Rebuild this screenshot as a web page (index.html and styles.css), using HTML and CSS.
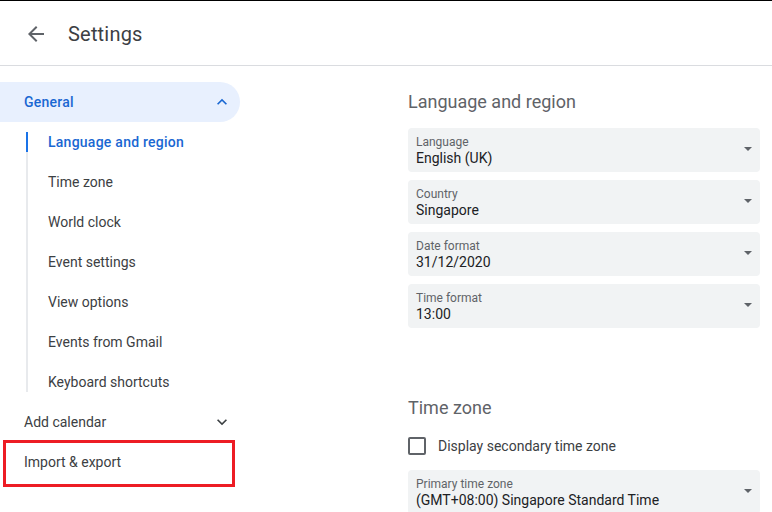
FILE: index.html
```html
<!DOCTYPE html>
<html lang="en">
<head>
<meta charset="utf-8">
<title>Settings</title>
<link rel="stylesheet" href="styles.css">
</head>
<body>
<header class="header">
  <button class="back" aria-label="Back">
    <svg width="24" height="24" viewBox="0 0 24 24"><path d="M20 11H7.83l5.59-5.59L12 4l-8 8 8 8 1.41-1.41L7.83 13H20v-2z" fill="#5f6368"/></svg>
  </button>
  <h1 class="title">Settings</h1>
</header>
<main class="main">
  <nav class="sidebar">
    <div class="nav-row nav-open">
      <span>General</span>
      <svg class="chev" width="20" height="20" viewBox="0 0 24 24"><path d="M7.41 15.41L12 10.83l4.59 4.58L18 14l-6-6-6 6z" fill="#1967d2"/></svg>
    </div>
    <ul class="sublist">
      <li class="sub active">Language and region</li>
      <li class="sub">Time zone</li>
      <li class="sub">World clock</li>
      <li class="sub">Event settings</li>
      <li class="sub">View options</li>
      <li class="sub">Events from Gmail</li>
      <li class="sub">Keyboard shortcuts</li>
    </ul>
    <div class="nav-row">
      <span>Add calendar</span>
      <svg class="chev" width="20" height="20" viewBox="0 0 24 24"><path d="M7.41 8.59L12 13.17l4.59-4.58L18 10l-6 6-6-6z" fill="#3c4043"/></svg>
    </div>
    <div class="nav-row highlight">
      <span>Import &amp; export</span>
      <span class="redbox"></span>
    </div>
  </nav>
  <section class="content">
    <h2 class="section-title">Language and region</h2>
    <div class="fields">
      <div class="field"><div class="field-text"><div class="label">Language</div><div class="value">English (UK)</div></div><span class="caret"></span></div>
      <div class="field"><div class="field-text"><div class="label">Country</div><div class="value">Singapore</div></div><span class="caret"></span></div>
      <div class="field"><div class="field-text"><div class="label">Date format</div><div class="value">31/12/2020</div></div><span class="caret"></span></div>
      <div class="field"><div class="field-text"><div class="label">Time format</div><div class="value">13:00</div></div><span class="caret"></span></div>
    </div>
    <h2 class="section-title second">Time zone</h2>
    <label class="check-row"><span class="checkbox"></span><span>Display secondary time zone</span></label>
    <div class="field tz"><div class="field-text"><div class="label">Primary time zone</div><div class="value">(GMT+08:00) Singapore Standard Time</div></div><span class="caret"></span></div>
  </section>
</main>
</body>
</html>
```
FILE: styles.css
```css
* { box-sizing: border-box; }
html, body { margin: 0; padding: 0; }
body {
  font-family: Roboto, "Liberation Sans", Arial, sans-serif;
  color: #3c4043;
  background: #fff;
  width: 772px;
  height: 512px;
  overflow: hidden;
}
.header {
  height: 66px;
  border-top: 1px solid #000;
  border-bottom: 1px solid #dadce0;
  display: flex;
  align-items: center;
  padding-left: 24px;
  padding-top: 2px;
}
.back {
  width: 24px;
  height: 24px;
  padding: 0;
  border: 0;
  background: none;
  display: flex;
}
.title {
  margin: 0 0 0 20px;
  font-size: 20px;
  font-weight: 400;
  color: #3c4043;
  letter-spacing: 0.2px;
}
.main {
  display: flex;
}
.sidebar {
  width: 256px;
  flex: none;
  padding-top: 16px;
}
.nav-row {
  width: 240px;
  height: 40px;
  display: flex;
  align-items: center;
  justify-content: space-between;
  padding: 0 8px 0 24px;
  font-size: 14px;
  color: #3c4043;
  border-radius: 0 20px 20px 0;
  position: relative;
}
.nav-open {
  background: #e8f0fe;
  color: #1967d2;
  font-weight: 500;
  letter-spacing: 0.25px;
}
.chev { display: block; }
.sublist {
  list-style: none;
  margin: 10px 0 10px 26px;
  padding: 0;
  border-left: 2px solid #e8eaed;
  display: flex;
  flex-direction: column;
  gap: 20px;
}
.sub {
  margin-left: -2px;
  border-left: 2px solid transparent;
  padding-left: 20px;
  line-height: 20px;
  font-size: 14px;
  color: #3c4043;
}
.sub.active {
  border-left-color: #1a73e8;
  color: #1967d2;
  font-weight: 500;
  letter-spacing: 0.25px;
}
.redbox {
  position: absolute;
  left: 3px;
  top: -2px;
  width: 232px;
  height: 47px;
  border: 3px solid #ed1c24;
}
.content {
  padding: 24px 0 0 152px;
  width: 516px;
}
.section-title {
  margin: 0 0 14px;
  font-size: 18px;
  line-height: 24px;
  font-weight: 400;
  color: #5f6368;
}
.section-title.second {
  margin: 68px 0 6px;
}
.fields {
  display: flex;
  flex-direction: column;
  gap: 8px;
}
.field {
  width: 352px;
  height: 44px;
  background: #f1f3f4;
  border-radius: 4px;
  display: flex;
  align-items: center;
  justify-content: space-between;
  padding: 0 8px 0 8px;
}
.field-text {
  display: flex;
  flex-direction: column;
  padding-top: 1px;
}
.label {
  font-size: 12px;
  line-height: 16px;
  color: #5f6368;
}
.value {
  font-size: 14px;
  line-height: 17px;
  color: #202124;
}
.caret {
  width: 0;
  height: 0;
  border-left: 4px solid transparent;
  border-right: 4px solid transparent;
  border-top: 4px solid #5f6368;
  margin-top: -2px;
}
.check-row {
  display: flex;
  align-items: center;
  height: 40px;
  font-size: 14px;
  color: #3c4043;
  gap: 12px;
}
.checkbox {
  width: 18px;
  height: 18px;
  border: 2px solid #5f6368;
  border-radius: 2px;
}
.field.tz { margin-top: 4px; }
```
